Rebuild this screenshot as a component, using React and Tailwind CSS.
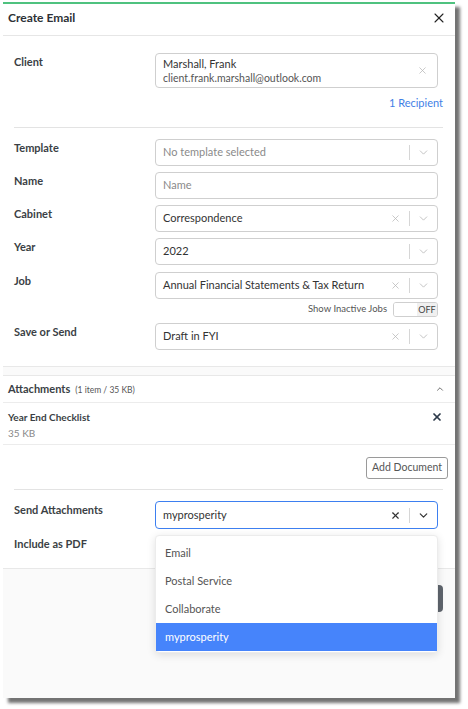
import React from 'react';
import { X, ChevronDown, ChevronUp } from 'lucide-react';

const font = { fontFamily: 'Lato, "Noto Sans", sans-serif' };

const Label = ({ children }) => (
  <div className='w-[141px] shrink-0 mt-[1px] text-[11px] leading-4 font-bold text-[#3b3f45]'>{children}</div>
);

const Select = ({ value, placeholder, clearable, focused, h = 'h-[27px]' }) => (
  <div className={`flex-1 mr-[5px] ${h} flex items-center rounded-[4px] bg-white ${focused ? 'border-[1.5px] border-[#3d7ff0]' : 'border border-[#cfcfcf]'}`}>
    <div className={`flex-1 pl-[7px] text-[11px] whitespace-nowrap ${value ? 'text-[#333]' : 'text-[#8a8a8a]'}`}>{value || placeholder}</div>
    {clearable && <X size={11} strokeWidth={focused ? 2.5 : 1.6} className={focused ? 'text-[#333] mr-[8px]' : 'text-[#b5b5b5] mr-[8px]'} />}
    <div className='w-px h-[15px] bg-[#d6d6d6]'></div>
    <ChevronDown size={13} strokeWidth={focused ? 2.2 : 1.5} className={`mx-[7px] ${focused ? 'text-[#333]' : 'text-[#b5b5b5]'}`} />
  </div>
);

const Row = ({ label, children, className = '' }) => (
  <div className={`flex items-start ${className}`}>
    <Label>{label}</Label>
    {children}
  </div>
);

const sendOptions = ['Email', 'Postal Service', 'Collaborate', 'myprosperity'];

const App = () => {
  return (
    <div className='w-[468px] h-[709px] bg-white pt-[2px] pl-[3px]' style={font}>
      <div className='w-[452px] h-[696px] bg-[#fafafa] border-t-2 border-[#4fc27f] shadow-[5px_5px_3px_rgba(0,0,0,0.55)] flex flex-col'>
        {/* header */}
        <div className='h-[32px] bg-white border-b border-[#e6e6e6] flex items-center justify-between pl-[5px] pr-[8px] pb-[3px]'>
          <h1 className='text-[12px] font-bold text-[#2d3136]'>Create Email</h1>
          <X size={16} strokeWidth={1.6} className='text-[#222]' />
        </div>

        {/* details card */}
        <div className='bg-white border-b border-[#e8e8e8] pl-[11px] pr-[12px] pt-[17px] pb-[16px]'>
          <Row label='Client'>
            <div className='flex-1 mr-[5px] h-[35px] border border-[#cfcfcf] rounded-[4px] flex items-center pl-[7px] pr-[9px]'>
              <div className='flex-1 flex flex-col leading-[15px]'>
                <span className='text-[11px] text-[#333]'>Marshall, Frank</span>
                <span className='text-[10.5px] text-[#555]'>client.frank.marshall@outlook.com</span>
              </div>
              <X size={11} strokeWidth={1.6} className='text-[#b5b5b5]' />
            </div>
          </Row>
          <div className='text-right text-[11px] text-[#3f7fe6] mt-[7px] leading-4'>1 Recipient</div>
          <div className='border-t border-[#e3e3e3] mt-[16px]'></div>

          <div className='flex flex-col gap-[6px] mt-[11px]'>
            <Row label='Template'><Select placeholder='No template selected' /></Row>
            <Row label='Name'>
              <div className='flex-1 mr-[5px] h-[27px] border border-[#cfcfcf] rounded-[4px] flex items-center pl-[7px] text-[11px] text-[#8a8a8a]'>Name</div>
            </Row>
            <Row label='Cabinet'><Select value='Correspondence' clearable /></Row>
            <Row label='Year'><Select value='2022' /></Row>
            <Row label='Job' className='mt-[1px]'><Select value='Annual Financial Statements & Tax Return' clearable /></Row>
          </div>
          <div className='flex items-center justify-end gap-[6px] mt-[3px] mr-[5px]'>
            <span className='text-[9.5px] text-[#555]'>Show Inactive Jobs</span>
            <div className='w-[45px] h-[15px] border border-[#cfcfcf] rounded-[3px] flex overflow-hidden'>
              <div className='flex-1 bg-white'></div>
              <div className='w-[20px] bg-[#f0f0f0] text-[9px] leading-[13px] text-[#444] text-center'>OFF</div>
            </div>
          </div>
          <Row label='Save or Send' className='mt-[6px]'><Select value='Draft in FYI' clearable /></Row>
        </div>

        {/* attachments card */}
        <div className='mt-[8px] bg-white border-y border-[#e8e8e8]'>
          <div className='h-[27px] border-b border-[#ececec] flex items-center justify-between pl-[5px] pr-[10px]'>
            <div className='flex items-baseline gap-[5px]'>
              <span className='text-[11px] font-bold text-[#3b3f45]'>Attachments</span>
              <span className='text-[8.5px] text-[#555]'>(1 item / 35 KB)</span>
            </div>
            <ChevronUp size={10} strokeWidth={2} className='text-[#555]' />
          </div>
          <div className='h-[42px] border-b border-[#ececec] flex items-start justify-between pl-[5px] pr-[12px] pt-[6px]'>
            <div className='flex flex-col leading-4'>
              <span className='text-[10px] font-bold text-[#3b3f45]'>Year End Checklist</span>
              <span className='text-[10px] text-[#888]'>35 KB</span>
            </div>
            <X size={12} strokeWidth={3.5} className='text-[#2d3a4a] mt-[2px]' />
          </div>
          <div className='pl-[11px] pr-[12px]'>
            <div className='flex justify-end pt-[12px] -mr-[5px]'>
              <button className='h-[22px] px-[5px] border border-[#9a9a9a] rounded-[3px] text-[10.5px] text-[#555] bg-white'>Add Document</button>
            </div>
            <div className='border-t border-[#e3e3e3] mt-[10px]'></div>
            <Row label='Send Attachments' className='mt-[11px]'>
              <div className='flex-1 relative flex'>
                <Select value='myprosperity' clearable focused h='h-[28px]' />
                <div className='absolute left-0 right-[5px] top-[34px] z-10 bg-white rounded-[4px] border border-[#ececec] shadow-[0_2px_8px_rgba(0,0,0,0.12)] pt-[3px] pb-[1px]'>
                  {sendOptions.map((opt) => (
                    <div
                      key={opt}
                      className={`h-[28px] flex items-center pl-[9px] text-[11px] ${opt === 'myprosperity' ? 'bg-[#4684fb] text-white' : 'text-[#555]'}`}
                    >
                      {opt}
                    </div>
                  ))}
                </div>
              </div>
            </Row>
            <Row label='Include as PDF' className='mt-[6px] pb-[16px]'><div className='flex-1 h-[16px]'></div></Row>
          </div>
        </div>

        {/* footer */}
        <div className='flex justify-end pr-[12px] pt-[16px]'>
          <button className='h-[27px] px-[14px] rounded-[4px] bg-[#5f656d] text-white text-[12px]'>Send</button>
        </div>
      </div>
    </div>
  );
};

export default App;
